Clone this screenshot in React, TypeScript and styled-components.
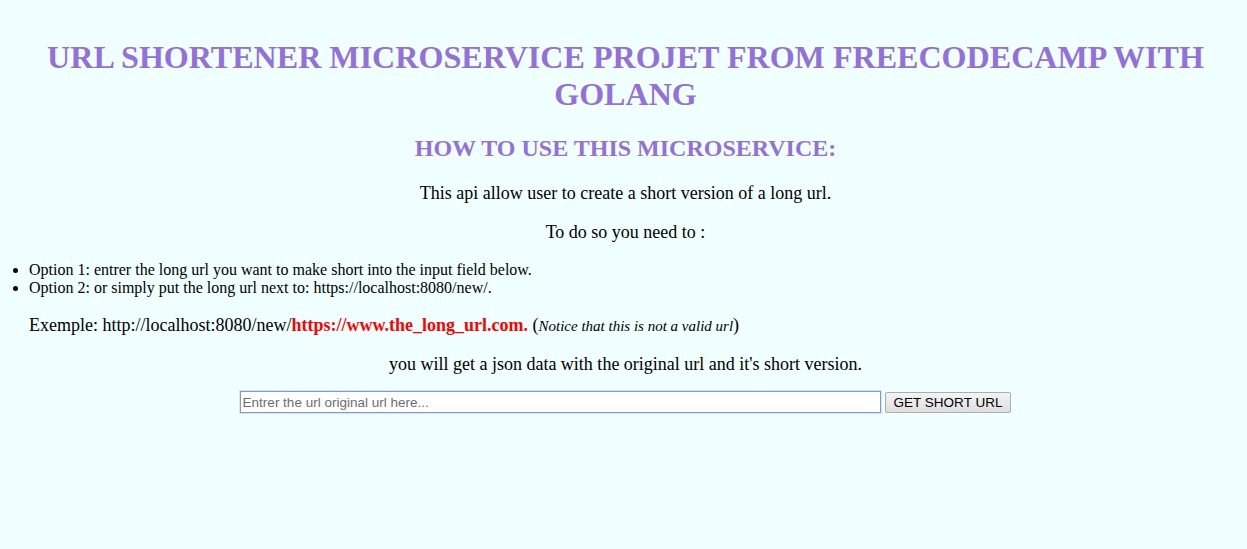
import React from "react";
import styled, { createGlobalStyle } from "styled-components";

const Global = createGlobalStyle`
  html, body { margin: 0; padding: 0; background: #f0ffff; }
  body { font-family: "Liberation Serif", "Times New Roman", serif; color: #000; }
`;

const Page = styled.main`
  display: flex;
  flex-direction: column;
  padding: 0 6px 0 10px;
  min-height: 549px;
  box-sizing: border-box;
`;

const Title = styled.h1`
  color: #9370db;
  text-align: center;
  font-size: 32.1px;
  line-height: 37px;
  font-weight: bold;
  margin: 39px 0 0;
`;

const Sub = styled.h2`
  color: #9370db;
  text-align: center;
  font-size: 24px;
  line-height: 28px;
  font-weight: bold;
  margin: 21px 0 0;
`;

const Para = styled.p<{ $indent?: boolean; $top?: number }>`
  font-size: 18px;
  line-height: 21px;
  margin: ${(p) => `${p.$top ?? 18}px 0 0 ${p.$indent ? 19 : 0}px`};
  text-align: ${(p) => (p.$indent ? "left" : "center")};
`;

const List = styled.ul`
  margin: 18px 0 0;
  padding-left: 19px;
  font-size: 16px;
  line-height: 18px;
`;

const Red = styled.strong`
  color: #ff0000;
`;

const Note = styled.em`
  font-size: 15px;
`;

const Form = styled.form`
  display: flex;
  justify-content: center;
  align-items: center;
  gap: 4px;
  margin-top: 16px;
`;

const Input = styled.input`
  width: 641px;
  height: 22px;
  box-sizing: border-box;
  border: 1px solid #7a9cd3;
  box-shadow: 0 0 0 1px #d6e4f7;
  outline: none;
  padding: 1px 2px;
  font-family: "Liberation Sans", Arial, sans-serif;
  font-size: 13.5px;
  background: #fff;
  &::placeholder { color: #6d6d6d; }
`;

const Button = styled.button`
  height: 21px;
  padding: 0 8px;
  font-family: "Liberation Sans", Arial, sans-serif;
  font-size: 13.5px;
  color: #000;
  background: linear-gradient(#f4f4f4, #dedede);
  border: 1px solid #adadad;
  border-radius: 2px;
`;

export default function App() {
  return (
    <>
      <Global />
      <Page>
        <Title>URL SHORTENER MICROSERVICE PROJET FROM FREECODECAMP WITH GOLANG</Title>
        <Sub>HOW TO USE THIS MICROSERVICE:</Sub>
        <Para $top={21}>This api allow user to create a short version of a long url.</Para>
        <Para>To do so you need to :</Para>
        <List>
          <li>Option 1: entrer the long url you want to make short into the input field below.</li>
          <li>Option 2: or simply put the long url next to: https://localhost:8080/new/.</li>
        </List>
        <Para $indent>
          Exemple: http://localhost:8080/new/<Red>https://www.the_long_url.com.</Red> (<Note>Notice that this is not a valid url</Note>)
        </Para>
        <Para $top={17}>you will get a json data with the original url and it's short version.</Para>
        <Form onSubmit={(e) => e.preventDefault()}>
          <Input placeholder="Entrer the url original url here..." />
          <Button type="submit">GET SHORT URL</Button>
        </Form>
      </Page>
    </>
  );
}
